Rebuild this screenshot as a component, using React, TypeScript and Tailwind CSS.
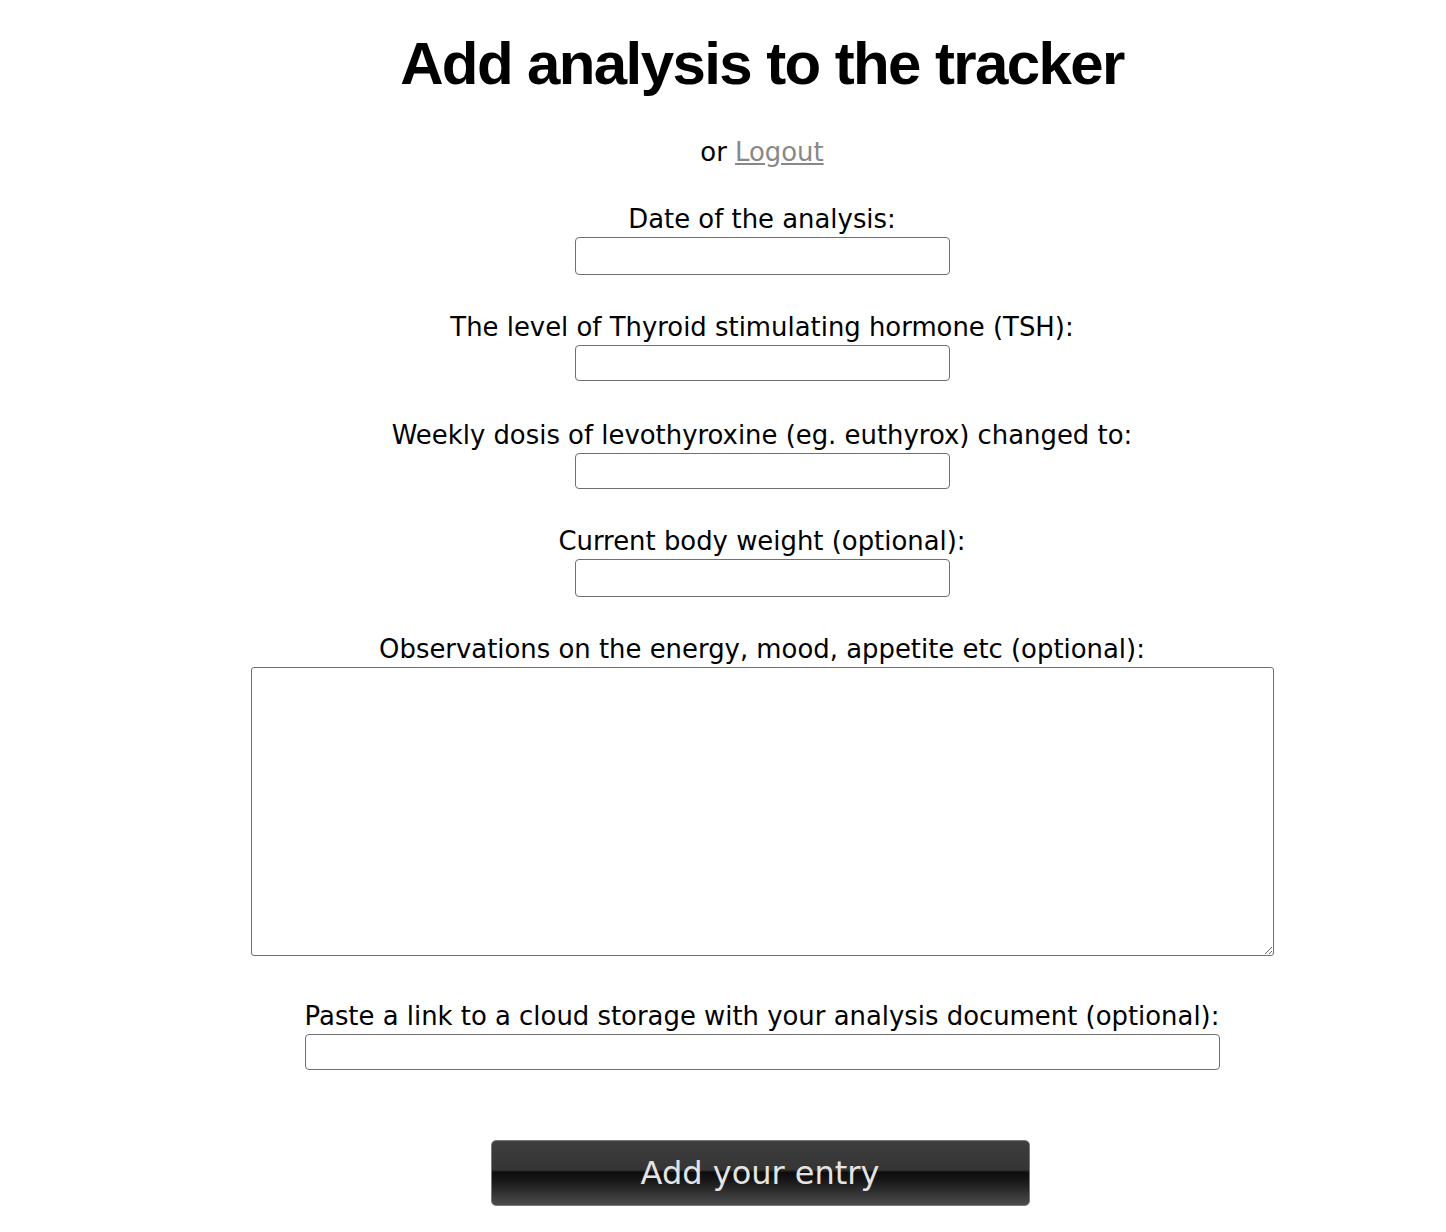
import React from "react";

interface FieldProps {
  label: string;
  className?: string;
  children: React.ReactNode;
}

function Field({ label, className, children }: FieldProps) {
  return (
    <div className={"self-stretch flex flex-col items-center " + (className ?? "")}>
      <label className="block text-center leading-[31px] pb-[2px] whitespace-nowrap">{label}</label>
      {children}
    </div>
  );
}

const inputCls = "block w-[375px] border border-[#6f6f6f] rounded-[4px] bg-white";

export default function App() {
  return (
    <div className="min-h-screen bg-white text-black font-['DejaVu_Sans',sans-serif] text-[25.9px] pl-[78px] pt-[34px] pb-[30px] flex flex-col items-center">
      <h1 className="font-['Liberation_Sans',Arial,sans-serif] font-bold text-[60px] leading-[60px] tracking-[-1.6px] whitespace-nowrap">
        Add analysis to the tracker
      </h1>
      <p className="mt-[42px] leading-[33px]">
        or{" "}
        <a href="#" className="text-[#888888] underline">
          Logout
        </a>
      </p>

      <form className="flex flex-col items-center" onSubmit={(e) => e.preventDefault()}>
        <Field label="Date of the analysis:" className="mt-[35px]">
          <input type="text" className={inputCls + " h-[38px]"} />
        </Field>
        <Field label="The level of Thyroid stimulating hormone (TSH):" className="mt-[37px]">
          <input type="text" className={inputCls + " h-[36px]"} />
        </Field>
        <Field label="Weekly dosis of levothyroxine (eg. euthyrox) changed to:" className="mt-[39px]">
          <input type="text" className={inputCls + " h-[36px]"} />
        </Field>
        <Field label="Current body weight (optional):" className="mt-[37px]">
          <input type="text" className={inputCls + " h-[38px]"} />
        </Field>
        <Field label="Observations on the energy, mood, appetite etc (optional):" className="mt-[37px]">
          <textarea className="block w-[1023px] h-[289px] border border-[#6f6f6f] rounded-[3px] bg-white resize" />
        </Field>
        <Field label="Paste a link to a cloud storage with your analysis document (optional):" className="mt-[45px]">
          <input type="text" className="block w-[915px] h-[36px] border border-[#6f6f6f] rounded-[4px] bg-white" />
        </Field>

        <button
          type="submit"
          className="mt-[70px] mr-[4px] w-[539px] h-[66px] flex items-center justify-center rounded-[5px] border border-[#7a7a7a] text-[32px] text-[#e4e4e4] bg-[linear-gradient(to_bottom,#3e3e3e_0%,#353535_45%,#0c0c0c_49%,#181818_62%,#4c4c4c_100%)]"
        >
          Add your entry
        </button>
      </form>
    </div>
  );
}
